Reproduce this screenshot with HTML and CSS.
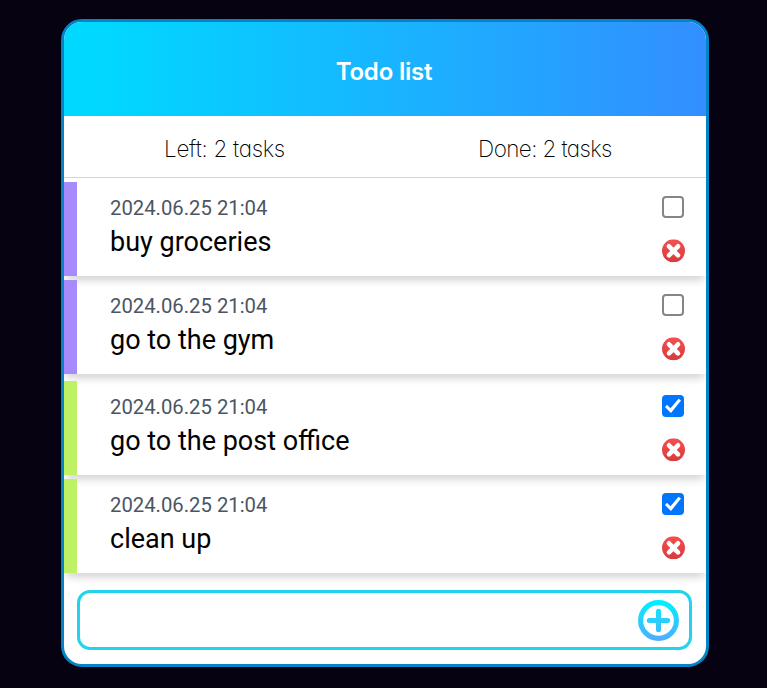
FILE: index.html
```html
<!DOCTYPE html>
<html lang="en">
<head>
<meta charset="utf-8">
<title>Todo list</title>
<link rel="stylesheet" href="styles.css">
</head>
<body>
<svg class="defs" width="0" height="0" aria-hidden="true">
  <defs>
    <linearGradient id="red" x1="0" y1="0" x2="0" y2="1"><stop offset="0" stop-color="#f44f50"/><stop offset="1" stop-color="#d83b3e"/></linearGradient>
    <linearGradient id="aqua" gradientUnits="userSpaceOnUse" x1="0" y1="0" x2="0" y2="41"><stop offset="0" stop-color="#00f2fe"/><stop offset="1" stop-color="#4facfe"/></linearGradient>
    <symbol id="remove" viewBox="0 0 23 23">
      <circle cx="11.5" cy="11.5" r="11.5" fill="url(#red)"/>
      <path d="M7 7l9 9M16 7l-9 9" stroke="#fff" stroke-width="4.6" stroke-linecap="round"/>
    </symbol>
  </defs>
</svg>
<main class="card">
  <header class="header"><h1 class="title">Todo list</h1></header>
  <div class="stats"><span class="stat left">Left: 2 tasks</span><span class="stat done">Done: 2 tasks</span></div>
  <ul class="list">
    <li class="item">
      <div class="text"><time class="date">2024.06.25 21:04</time><p class="name">buy groceries</p></div>
      <div class="actions"><input class="check" type="checkbox"><svg class="remove"><use href="#remove"/></svg></div>
    </li>
    <li class="item">
      <div class="text"><time class="date">2024.06.25 21:04</time><p class="name">go to the gym</p></div>
      <div class="actions"><input class="check" type="checkbox"><svg class="remove"><use href="#remove"/></svg></div>
    </li>
  </ul>
  <ul class="list completed">
    <li class="item">
      <div class="text"><time class="date">2024.06.25 21:04</time><p class="name">go to the post office</p></div>
      <div class="actions"><input class="check" type="checkbox" checked><svg class="remove"><use href="#remove"/></svg></div>
    </li>
    <li class="item">
      <div class="text"><time class="date">2024.06.25 21:04</time><p class="name">clean up</p></div>
      <div class="actions"><input class="check" type="checkbox" checked><svg class="remove"><use href="#remove"/></svg></div>
    </li>
  </ul>
  <form class="new">
    <input class="field" type="text">
    <svg class="add" viewBox="0 0 41 41" fill="none" stroke="url(#aqua)">
      <circle cx="20.5" cy="20.5" r="17.9" stroke-width="5.1"/>
      <path d="M11.3 20.5H29.7M20.5 11.3V29.7" stroke-width="5" stroke-linecap="round"/>
    </svg>
  </form>
</main>
</body>
</html>
```
FILE: styles.css
```css
* { box-sizing: border-box; margin: 0; padding: 0; }
body { background: #070211; font-family: Roboto, sans-serif; color: #000; height: 688px; overflow: hidden; padding: 19px 58px 0 61px; }
.defs { position: absolute; }
.card { width: 648px; height: 648px; border: 3px solid #0284c7; border-radius: 21px; background: #fff; overflow: hidden; }
.header { height: 94px; display: flex; align-items: center; justify-content: center; background: linear-gradient(to right, #00d8ff 5%, #338eff); }
.title { font: 600 24px/34px Inter, sans-serif; letter-spacing: -.2px; color: #fff; padding: 6px 2px 0 0; }
.stats { height: 62px; display: grid; grid-template-columns: 1fr 1fr; align-items: center; border-bottom: 1px solid #d1d5db; padding-top: 3px; }
.stat { text-align: center; font: 200 22.5px/33px Inter, sans-serif; font-feature-settings: "cv11"; letter-spacing: -.3px; color: #000; }
.done { letter-spacing: -.6px; padding-right: 1px; }
.list { list-style: none; display: grid; gap: 4px; padding-top: 4px; }
.completed { padding-top: 7px; }
.item { height: 94px; display: flex; justify-content: space-between; border-left: 13px solid #a78bfa; padding: 13px 21px 0 33px; box-shadow: 0 5px 8px -1px rgba(0,0,0,.1), 0 7px 10px -4px rgba(0,0,0,.1); }
.completed .item { border-left-color: #bef264; }
.date { display: block; font-size: 20.3px; line-height: 27px; color: #4b5563; }
.name { font-size: 27px; line-height: 41px; }
.actions { display: flex; flex-direction: column; align-items: flex-start; gap: 21px; padding-top: 1px; }
.check { appearance: none; width: 22px; height: 22px; border: 2px solid #868686; border-radius: 4px; background: #fff; }
.check:checked { border: 0; background: #0075ff; }
.check:checked::before { content: ""; display: block; width: 22px; height: 22px; background: #fff; clip-path: polygon(3px 12px, 5px 9.8px, 8.5px 13.3px, 16.6px 3.8px, 19px 5.5px, 9px 18px); }
.remove { width: 23px; height: 23px; display: block; transform: translateY(.3px); }
.new { margin: 17px 14px 0 13px; height: 60px; border: 3px solid #22d3ee; border-radius: 13px; display: flex; align-items: center; padding: 0 10px; }
.field { flex: 1; min-width: 0; border: 0; outline: 0; background: transparent; font: 24px Roboto, sans-serif; }
.add { width: 41px; height: 41px; flex: none; }
```
